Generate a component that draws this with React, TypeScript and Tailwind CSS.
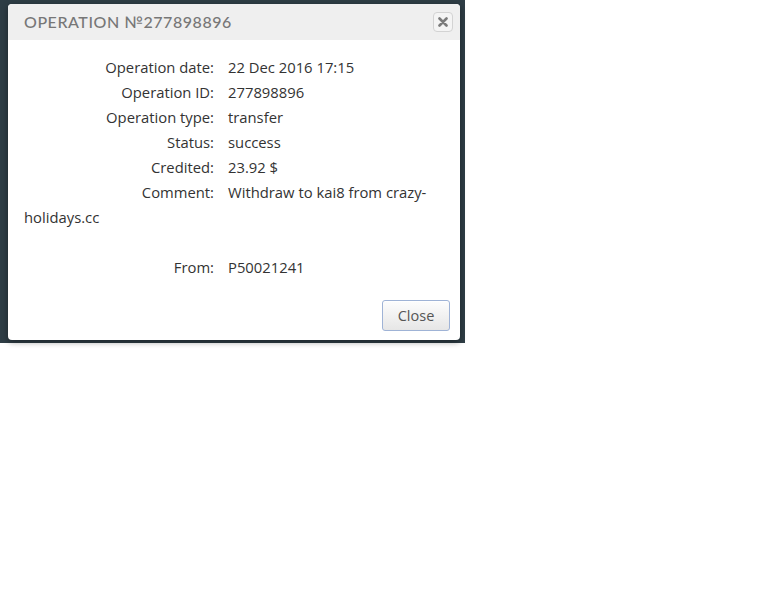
import React from "react";

interface Row {
  label: string;
  value: string;
}

const rows: Row[] = [
  { label: "Operation date:", value: "22 Dec 2016 17:15" },
  { label: "Operation ID:", value: "277898896" },
  { label: "Operation type:", value: "transfer" },
  { label: "Status:", value: "success" },
  { label: "Credited:", value: "23.92 $" },
  { label: "Comment:", value: "Withdraw to kai8 from crazy-holidays.cc" },
];

const App: React.FC = () => {
  return (
    <div className="min-h-[614px] w-[768px] bg-white" style={{ fontFamily: '"Open Sans", "Liberation Sans", sans-serif' }}>
      <div className="h-[343px] w-[465px] bg-[#2e3d45] pt-[4px] pl-[8px]">
        <div className="flex h-[336px] w-[452px] flex-col overflow-hidden rounded-[4px] bg-white shadow-[0_2px_6px_rgba(0,0,0,0.4)]">
          {/* title bar */}
          <div className="flex h-[36px] items-center justify-between bg-[#efefef] pl-[16px] pr-[7px]">
            <span
              className="text-[16px] font-medium uppercase tracking-[0.55px] text-[#777]"
              style={{ fontFamily: 'Lato, "Open Sans", sans-serif' }}
            >
              Operation №277898896
            </span>
            <button className="flex h-[20px] w-[20px] items-center justify-center rounded-[4px] border border-[#d3d3d3] bg-[#f4f4f4]">
              <svg width="10" height="10" viewBox="0 0 10 10">
                <path d="M1.5 1.5 L8.5 8.5 M8.5 1.5 L1.5 8.5" stroke="#7b7b7b" strokeWidth="2.6" strokeLinecap="round" />
              </svg>
            </button>
          </div>

          {/* body */}
          <div className="pl-[16px] pr-[16px] pt-[15px] text-[14.8px] leading-[25px] text-[#333]">
            {rows.map((r) => (
              <div key={r.label}>
                <span className="mr-[14px] inline-block w-[190px] text-right">{r.label}</span>
                {r.value}
              </div>
            ))}
            <div className="h-[25px]" />
            <div>
              <span className="mr-[14px] inline-block w-[190px] text-right">From:</span>
              P50021241
            </div>
          </div>

          {/* footer */}
          <div className="flex justify-end pr-[10px] pt-[20px]">
            <button className="h-[31px] w-[68px] rounded-[3px] border border-[#9fb3d6] bg-gradient-to-b from-[#fdfdfd] to-[#e6e6e6] text-[14.5px] text-[#555] shadow-[inset_0_1px_0_#fff]">
              Close
            </button>
          </div>
        </div>
      </div>
    </div>
  );
};

export default App;
